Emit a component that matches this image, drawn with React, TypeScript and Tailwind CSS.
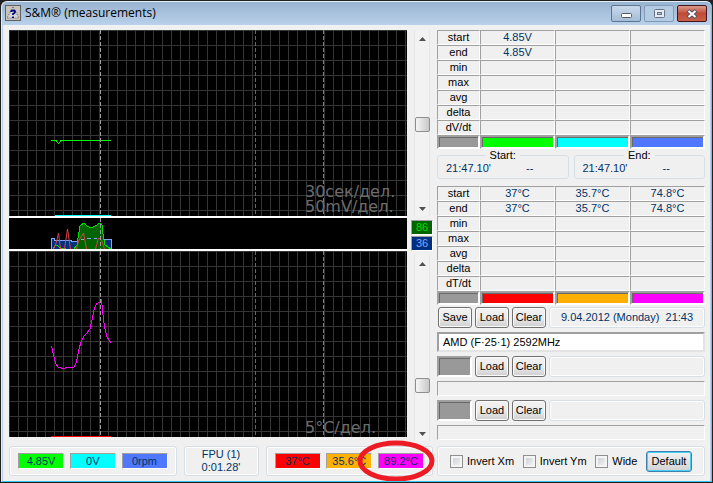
import { ReactNode } from "react";

type Line = { points: string; color: string };

const Chart = ({ id, lines, children }: { id: string; lines: Line[]; children: ReactNode }) => (
    <div className="relative h-[186px] bg-black">
        <svg className="block w-full h-full" shapeRendering="crispEdges">
            <defs>
                <pattern id={id} width="9" height="15" patternUnits="userSpaceOnUse">
                    <path d="M0 .5H9M.5 0V15" stroke="#343434" fill="none" />
                </pattern>
            </defs>
            <rect width="100%" height="100%" fill={`url(#${id})`} />
            {lines.map((line) => (
                <polyline key={line.points} points={line.points} stroke={line.color} fill="none" />
            ))}
            <g strokeDasharray="4 2">
                <path d="M91.500 0V186" stroke="#a0a0a0" />
                <path d="M246.500 0V186" stroke="#008ca0" />
                <path d="M314.500 0V186" stroke="#a08010" />
            </g>
        </svg>
        <div className="absolute right-1 bottom-0.5 w-[98px] whitespace-nowrap text-[16px] leading-[15px] text-[#6c6c6c] font-['DejaVu_Sans',sans-serif]">
            {children}
        </div>
    </div>
);

const UsageStrip = () => (
    <svg className="block w-full h-[31px] bg-black">
        <g shapeRendering="crispEdges">
            <path d="M42.500 31V20.500H45V22.500H62V23.500H69V22.500H76V20.500H92V21.500H102.500V31Z" fill="#003080" stroke="#80a8ff" />
            <path d="M65 31L68 27L69.500 17L71 8L75 5L78 8L82 10L86 8L91 5L93 7L94.500 20L96 27L102 31Z" fill="#006400" stroke="#00e000" />
            <path d="M44 31L47 27L52 30H57" stroke="#00e000" fill="none" />
            <path d="M72 21.500H75M78 20.500H82M85 20.500H88" stroke="#80a8ff" />
        </g>
        <g stroke="#e04040" fill="none">
            <polyline points="44.5,31 47.5,24 49.5,15 51.500,31" />
            <polyline points="55.5,31 58.5,11 61.5,31" />
            <polyline points="67.5,31 69.5,23 74.5,15 77.5,31" />
            <polyline points="86.5,31 89.5,20 92.5,22 95.5,31" />
        </g>
        <path d="M91.500 0V31" stroke="#a0a0a0" strokeDasharray="4 2" shapeRendering="crispEdges" />
    </svg>
);

const ScrollBar = ({ label, thumb }: { label: string; thumb: string }) => (
    <div role="scrollbar" aria-label={label} aria-controls="charts" aria-valuenow={50} className="w-4 h-[186px] flex flex-col items-center justify-between bg-[#f2f2f2] border-x border-[#e6e6e6] pt-[7px] pb-[5px]">
        <svg width="7" height="4"><path d="M0 4L3.500 0L7 4Z" fill="#505050" /></svg>
        <div className={`w-[15px] h-[15px] shrink-0 border border-[#8e8e8e] rounded-xs bg-linear-to-r from-[#f6f6f6] to-[#c8c8c8] ${thumb}`} />
        <svg width="7" height="4"><path d="M0 0L3.500 4L7 0Z" fill="#505050" /></svg>
    </div>
);

const Sunken = "border border-t-[#a0a0a0] border-l-[#a0a0a0] border-b-white border-r-white";
const Group = "border border-[#d5dfe5] rounded-[3px] shadow-[inset_0_0_0_1px_#fff]";

const Readout = ({ value, color }: { value: string; color: string }) => (
    <div className={`w-[46px] h-4 ${Sunken} ${color} text-center leading-[14px] text-[#003366]`}>{value}</div>
);

const Swatch = ({ color }: { color: string }) => (
    <div className="h-[14px] border-2 border-[#a0a0a0] border-b-white border-r-white">
        <div className={`h-full border-t border-l border-[#696969] ${color}`} />
    </div>
);

type Row = [string, string?, string?, string?];

const StatTable = ({ label, rows, colors }: { label: string; rows: Row[]; colors: string[] }) => (
    <table aria-label={label} className="w-full table-fixed border-separate border-spacing-0">
        <colgroup>
            <col className="w-[43px]" />
            <col />
            <col />
            <col />
        </colgroup>
        <tbody>
            {rows.map(([name, ...values]) => (
                <tr key={name}>
                    <th className={`h-[15px] p-0 font-normal leading-[13px] ${Sunken}`}>{name}</th>
                    {[0, 1, 2].map((i) => (
                        <td key={i} className={`p-0 text-center leading-[13px] text-[#003366] ${Sunken}`}>{values[i]}</td>
                    ))}
                </tr>
            ))}
            <tr>
                {colors.map((color) => (
                    <td key={color} className="p-0"><Swatch color={color} /></td>
                ))}
            </tr>
        </tbody>
    </table>
);

const Button = ({ children }: { children: ReactNode }) => (
    <button className="w-[34px] h-[21px] shrink-0 border border-[#707070] rounded-[3px] bg-linear-to-b from-[#f2f2f2] via-[#ebebeb] to-[#cfcfcf] shadow-[inset_0_0_0_1px_#fcfcfc] leading-[19px]">
        {children}
    </button>
);

const TimeBox = ({ title }: { title: string }) => (
    <fieldset className={`flex-1 h-[30px] ${Group} shadow-none px-2 pb-1 text-[#003366]`}>
        <legend className="mx-auto px-1 text-black leading-[13px]">{title}</legend>
        <div className="flex leading-[13px]">
            <span className="w-20">21:47.10'</span>
            <span>--</span>
        </div>
    </fieldset>
);

const Check = ({ label }: { label: string }) => (
    <label className="flex items-center gap-1">
        <input type="checkbox" className="appearance-none w-[13px] h-[13px] border border-[#8e8f8f] bg-linear-to-br from-[#c8cdd2] to-[#f6f6f6] shadow-[inset_0_0_0_2px_#f4f4f4]" />
        {label}
    </label>
);

const SavedSlot = () => (
    <>
        <div className="flex gap-[3px] mt-1">
            <div className="w-[35px] h-[21px] border-2 border-[#a0a0a0] border-b-white border-r-white">
                <div className="h-full border-t border-l border-[#696969] bg-[#999]" />
            </div>
            <Button>Load</Button>
            <Button>Clear</Button>
            <div className={`flex-1 ${Group}`} />
        </div>
        <div className={`h-[15px] mt-1 ${Sunken}`} />
    </>
);

const TitleBar = () => (
    <header className="h-[23px] flex items-start gap-1 pl-[3px] pr-1 bg-linear-to-b from-[#99b4d1] to-[#b9d1ea]">
        <svg width="16" height="16" viewBox="0 0 16 16" className="mt-[3px]">
            <rect x=".5" y=".5" width="15" height="15" fill="#c8c4bc" stroke="#606060" />
            <path d="M8 2L14 13H2Z" fill="#d8d8d8" stroke="#606060" strokeDasharray="1 1" />
            <path d="M6 7Q6 5.500 8 5.500Q10 5.500 10 7Q10 8 8 9V10M8 11.500V13" stroke="#000080" strokeWidth="1.8" fill="none" />
        </svg>
        <h1 className="flex-1 text-xs leading-[22px] font-['Open_Sans','Noto_Sans',sans-serif]">S&amp;M® (measurements)</h1>
        <div className="flex gap-[3px] mt-[3px]">
            <button aria-label="Minimize" className="w-[30px] h-[17px] flex items-center justify-center border border-[#5a7594] rounded-xs bg-linear-to-b from-[#c8d8ea] to-[#a5bdd6]">
                <svg width="11" height="5" className="mt-1"><rect x=".5" y=".5" width="10" height="4" rx="1" fill="#fff" stroke="#555b66" /></svg>
            </button>
            <button aria-label="Maximize" className="w-[30px] h-[17px] flex items-center justify-center border border-[#8299b8] rounded-xs bg-[#b4cbe4]">
                <svg width="11" height="9"><rect x=".5" y=".5" width="10" height="8" rx="1" fill="#e4ebf2" stroke="#697080" /><rect x="3.500" y="3.500" width="4" height="2" fill="#b4cbe4" stroke="#697080" /></svg>
            </button>
            <button aria-label="Close" className="w-[30px] h-[17px] flex items-center justify-center border border-[#43141a] rounded-xs bg-linear-to-b from-[#dc9a8c] via-[#c04a38] to-[#c86048]">
                <svg width="12" height="10"><path d="M2 1.500L10 8.500M10 1.500L2 8.500" stroke="#535666" strokeWidth="4" /><path d="M2.500 2L9.500 8M9.500 2L2.500 8" stroke="#fff" strokeWidth="2" /></svg>
            </button>
        </div>
    </header>
);

const App = () => {
    return (
        <div className="bg-[#202020] p-px text-[11px] text-black font-['Liberation_Sans',sans-serif]">
            <div className="bg-[#f0f0f0] border border-[#e4edf6] border-r-[#60c8f0] border-b-[#30c8f0] rounded-t-md overflow-hidden">
                <TitleBar />
                <main className="flex gap-1 border-x border-[#b9d1ea] pl-[6px] pr-[5px] pt-[5px] pb-[5px]">
                    <section className="flex-1 min-w-0">
                        <div className="flex items-start gap-1">
                            <div id="charts" className="flex-1 min-w-0 flex flex-col gap-[2px] bg-white">
                                <Chart id="voltGrid" lines={[
                                    { points: "42,110.5 47,110.5 49.5,113.5 52,110.5 102,110.5", color: "#00ff00" },
                                    { points: "46,185.5 102,185.5", color: "#00ffff" },
                                ]}>
                                    30сек/дел.<br />50mV/дел.
                                </Chart>
                                <UsageStrip />
                                <Chart id="tempGrid" lines={[
                                    { points: "42.5,95 44.5,104 46.5,112 49,116 54,117.5 58,116.5 65,116 67.5,111 69.5,100 72,91 75,85 78,82 81,78 83,69 85.5,57 87.5,53 91,51 92.5,48.5 93.5,60 95.5,76 98,86 102,92", color: "#ff00ff" },
                                    { points: "42,185.5 102,185.5", color: "#ff0000" },
                                ]}>
                                    5°С/дел.
                                </Chart>
                            </div>
                            <div className="w-[22px] flex flex-col items-center">
                                <ScrollBar label="Voltage scale" thumb="" />
                                <div className="w-full my-1 flex flex-col gap-px text-center leading-[13px]">
                                    <div className={`h-[15px] ${Sunken} bg-[#006400] text-[#00dc00]`}>86</div>
                                    <div className={`h-[15px] ${Sunken} bg-[#003080] text-[#80a8ff]`}>36</div>
                                </div>
                                <ScrollBar label="Temperature scale" thumb="mt-[72px]" />
                            </div>
                        </div>
                        <div className="flex gap-[7px] mt-[5px] text-[#003366]">
                            <div className={`flex-1 h-[30px] flex items-center justify-between px-2 ${Group}`}>
                                <Readout value="4.85V" color="bg-[#00ff00]" />
                                <Readout value="0V" color="bg-[#00ffff]" />
                                <Readout value="0rpm" color="bg-[#5078ff]" />
                            </div>
                            <div className={`w-[75px] h-[30px] text-center leading-[13px] pt-px ${Group}`}>
                                FPU (1)<br />0:01.28'
                            </div>
                            <div className={`relative flex-1 h-[30px] flex items-center justify-between px-2 ${Group}`}>
                                <Readout value="37°C" color="bg-[#ff0000]" />
                                <Readout value="35.6°C" color="bg-[#ffb000]" />
                                <Readout value="89.2°C" color="bg-[#ff00ff]" />
                                <svg width="80" height="44" className="absolute -right-1 -top-2 pointer-events-none">
                                    <ellipse cx="40" cy="22" rx="36" ry="18" fill="none" stroke="#ed1c24" strokeWidth="5" />
                                </svg>
                            </div>
                        </div>
                    </section>
                    <section className="w-[268px] shrink-0 flex flex-col">
                        <StatTable
                            label="Voltages"
                            rows={[["start", "4.85V"], ["end", "4.85V"], ["min"], ["max"], ["avg"], ["delta"], ["dV/dt"]]}
                            colors={["bg-[#999]", "bg-[#00ff00]", "bg-[#00ffff]", "bg-[#5078ff]"]}
                        />
                        <div className="flex gap-[5px]">
                            <TimeBox title="Start:" />
                            <TimeBox title="End:" />
                        </div>
                        <div className="mt-[7px]">
                            <StatTable
                                label="Temperatures"
                                rows={[
                                    ["start", "37°C", "35.7°C", "74.8°C"],
                                    ["end", "37°C", "35.7°C", "74.8°C"],
                                    ["min"], ["max"], ["avg"], ["delta"], ["dT/dt"],
                                ]}
                                colors={["bg-[#999]", "bg-[#ff0000]", "bg-[#ffb000]", "bg-[#ff00ff]"]}
                            />
                        </div>
                        <div className="flex gap-[3px] mt-[2px] pl-px">
                            <Button>Save</Button>
                            <Button>Load</Button>
                            <Button>Clear</Button>
                            <div className={`flex-1 text-center leading-[19px] whitespace-pre text-[#003366] ${Group}`}>9.04.2012 (Monday)  21:43</div>
                        </div>
                        <input aria-label="Processor" defaultValue="AMD (F·25·1) 2592MHz" className="h-5 mt-1 px-1 border-2 border-[#a0a0a0] border-b-[#e3e3e3] border-r-[#e3e3e3] bg-white outline-none" />
                        <SavedSlot />
                        <SavedSlot />
                        <div className={`h-[30px] mt-[6px] flex items-center justify-between px-3 ${Group}`}>
                            <Check label="Invert Xm" />
                            <Check label="Invert Ym" />
                            <Check label="Wide" />
                            <button className="w-[46px] h-[21px] border border-[#3c7fb1] rounded-[3px] bg-linear-to-b from-[#f2f2f2] to-[#d4d4d4] shadow-[inset_0_0_0_1px_#48d0f4] leading-[19px]">Default</button>
                        </div>
                    </section>
                </main>
            </div>
        </div>
    );
};

export default App;
